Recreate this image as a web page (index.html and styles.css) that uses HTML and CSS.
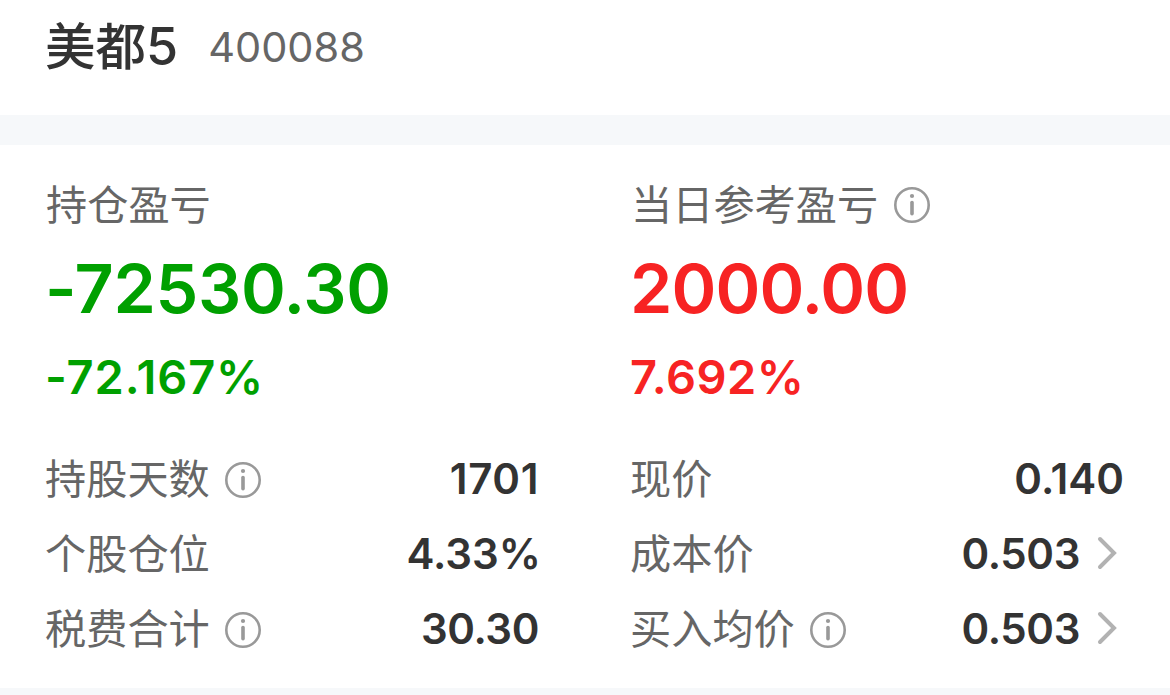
FILE: index.html
```html
<!DOCTYPE html>
<html lang="zh-CN">
<head>
    <meta charset="UTF-8" />
    <title>美都5 400088</title>
    <link rel="stylesheet" href="styles.css">
</head>
<body>
    <header class="stock-header">
        <h1 class="stock-name">美都<span class="stock-digit">5</span></h1>
        <span class="stock-code">400088</span>
    </header>
    <main class="position">
        <section class="column">
            <div class="title">
                <span class="label">持仓盈亏</span>
            </div>
            <div class="profit green">-72530.30</div>
            <div class="percent green">-72.167%</div>
            <div class="row">
                <span class="label">持股天数</span>
                <svg class="info" viewBox="0 0 36 36"><circle cx="18" cy="18" r="16.7" /><circle class="dot" cx="18" cy="9" r="2.1" /><path d="M18 15.5v11.3" /></svg>
                <span class="value days">1701</span>
            </div>
            <div class="row">
                <span class="label">个股仓位</span>
                <span class="value ratio">4.33%</span>
            </div>
            <div class="row">
                <span class="label">税费合计</span>
                <svg class="info" viewBox="0 0 36 36"><circle cx="18" cy="18" r="16.7" /><circle class="dot" cx="18" cy="9" r="2.1" /><path d="M18 15.5v11.3" /></svg>
                <span class="value">30.30</span>
            </div>
        </section>
        <section class="column">
            <div class="title">
                <span class="label">当日参考盈亏</span>
                <svg class="info" viewBox="0 0 36 36"><circle cx="18" cy="18" r="16.7" /><circle class="dot" cx="18" cy="9" r="2.1" /><path d="M18 15.5v11.3" /></svg>
            </div>
            <div class="profit red">2000.00</div>
            <div class="percent red">7.692%</div>
            <div class="row">
                <span class="label">现价</span>
                <span class="value price">0.140</span>
            </div>
            <div class="row">
                <span class="label">成本价</span>
                <span class="value">0.503</span>
                <svg class="arrow" viewBox="0 0 20 34"><path d="M3 3l14 14L3 31" /></svg>
            </div>
            <div class="row">
                <span class="label">买入均价</span>
                <svg class="info" viewBox="0 0 36 36"><circle cx="18" cy="18" r="16.7" /><circle class="dot" cx="18" cy="9" r="2.1" /><path d="M18 15.5v11.3" /></svg>
                <span class="value">0.503</span>
                <svg class="arrow" viewBox="0 0 20 34"><path d="M3 3l14 14L3 31" /></svg>
            </div>
        </section>
    </main>
</body>
</html>
```
FILE: styles.css
```css
* {
    box-sizing: border-box;
}
body {
    margin: 0;
    height: 695px;
    overflow: hidden;
    background: #f6f8fa;
    color: #333;
    font-family: Inter, "Noto Sans CJK SC", sans-serif;
}
.stock-header {
    display: flex;
    align-items: center;
    height: 145px;
    padding: 0 45px 22px;
    background: #fff;
    border-bottom: 30px solid #f6f8fa;
}
.stock-name {
    margin: 0;
    font-size: 50.5px;
    font-weight: 500;
    line-height: 60px;
}
.stock-digit {
    font-size: 52px;
    font-weight: 500;
}
.stock-code {
    margin-left: 30px;
    color: #666;
    font-size: 41.5px;
    line-height: 60px;
}
.position {
    display: grid;
    grid-template-columns: 494px 494px;
    column-gap: 91px;
    height: 543px;
    padding: 30px 46px 0 45px;
    background: #fff;
}
.title, .row {
    display: flex;
    align-items: center;
}
.title {
    height: 60px;
}
.label {
    color: #666;
    font-size: 41.2px;
    line-height: 60px;
    white-space: nowrap;
}
.title .label {
    padding-left: 1px;
}
.profit {
    height: 108px;
    font-size: 68px;
    font-weight: 600;
    letter-spacing: -0.3px;
    line-height: 107px;
}
.percent {
    height: 98px;
    font-size: 47px;
    font-weight: 600;
    letter-spacing: 0.5px;
    line-height: 67px;
}
.green {
    color: #00a000;
}
.red {
    color: #f72323;
}
.profit.red {
    letter-spacing: -0.9px;
}
.percent.green {
    letter-spacing: 0.9px;
}
.row {
    height: 75px;
}
.value {
    margin-left: auto;
    font-size: 42px;
    font-weight: 600;
    letter-spacing: -0.4px;
    line-height: 60px;
}
.days {
    letter-spacing: 0.6px;
}
.price {
    letter-spacing: 0;
}
.ratio {
    margin-right: -2px;
    letter-spacing: 0;
}
.info {
    width: 36px;
    height: 36px;
    margin-left: 15px;
    fill: none;
    stroke: #999;
    stroke-width: 2.6;
}
.info path {
    stroke-width: 3.6;
    stroke-linecap: round;
}
.info .dot {
    fill: #999;
    stroke: none;
}
.title .info {
    margin-left: 16px;
}
.row .info {
    margin-top: 2px;
}
.arrow {
    width: 20px;
    height: 34px;
    margin: 0 7px 2px 17px;
    fill: none;
    stroke: #b2b2b2;
    stroke-width: 4;
    stroke-linecap: round;
}
```
